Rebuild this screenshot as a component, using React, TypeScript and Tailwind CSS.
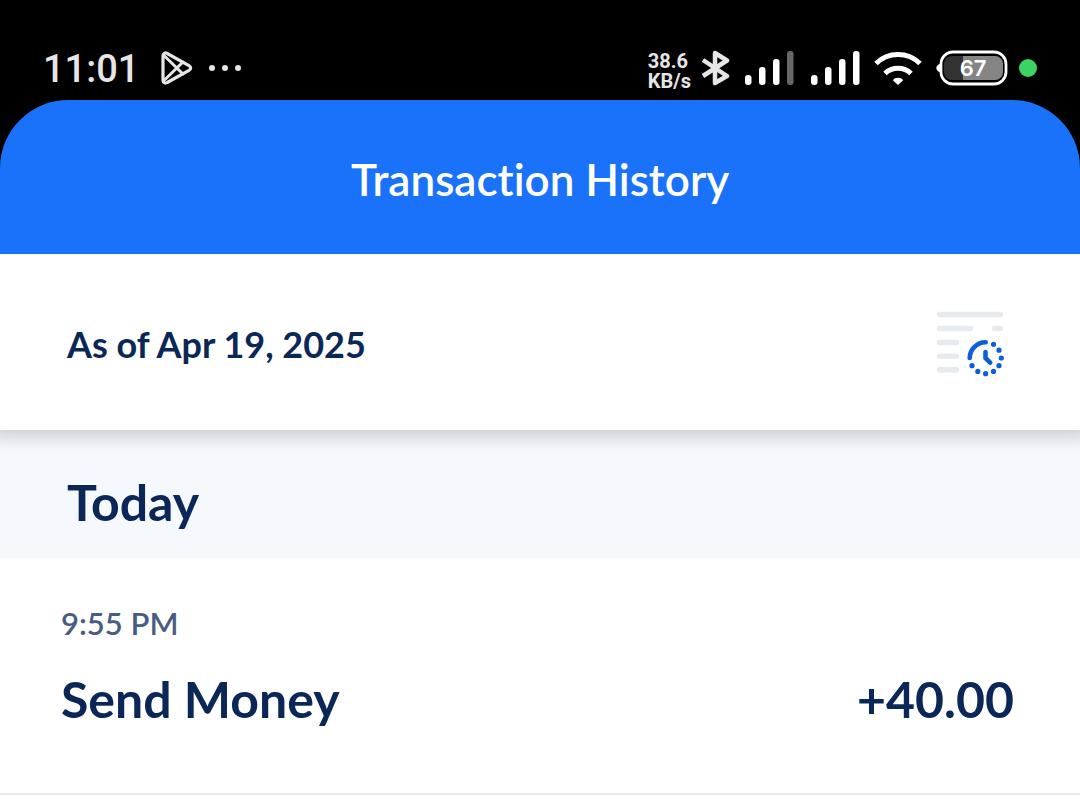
interface Transaction {
	id: number;
	time: string;
	title: string;
	amount: string;
}

const transactions: Transaction[] = [
	{ id: 1, time: "9:55 PM", title: "Send Money", amount: "+40.00" },
];

function PlayIcon() {
	return (
		<svg viewBox="0 0 32 34" className="w-8 h-[34px]" fill="none" stroke="#e6e6e6" strokeLinejoin="round" strokeLinecap="round">
			<path d="M2 4.8C2 2.4 4.2 1.3 6.2 2.5L28 14.6c2.2 1.3 2.2 3.5 0 4.8L6.2 31.5C4.2 32.700 2 31.600 2 29.200Z" strokeWidth="3.200" />
			<path d="M3 4.500 22 23M3 29.500 22 11" strokeWidth="3" />
		</svg>
	);
}

function BluetoothIcon() {
	return (
		<svg viewBox="0 0 30 36" className="w-[30px] h-9" fill="none" stroke="#e6e6e6" strokeWidth="4.500" strokeLinejoin="round">
			<path d="M2 10 26 26 14 33V3L26 10.500 2 26" />
		</svg>
	);
}

function SignalIcon({ weak = false }: { weak?: boolean }) {
	return (
		<svg viewBox="0 0 49 36" className="w-[49px] h-9" fill="#ffffff">
			<rect x="0" y="25" width="6.500" height="10" rx="3" />
			<rect x="14" y="17" width="6.500" height="18" rx="3" />
			<rect x="28" y="9" width="6.500" height="26" rx="3" />
			<rect x="42" y="1" width="6.500" height="34" rx="3" fill={weak ? "#666666" : "#ffffff"} />
		</svg>
	);
}

function WifiIcon() {
	return (
		<svg viewBox="0 0 48 36" className="w-12 h-9" fill="none" stroke="#ffffff" strokeWidth="5">
			<path d="M2 13.500C14 1.500 34 1.500 46 13.500" />
			<path d="M11 23.500C18 16.500 30 16.500 37 23.500" />
			<path d="M24 35 18.800 30.200C20.500 26.900 27.500 26.900 29.200 30.200Z" fill="#ffffff" stroke="none" />
		</svg>
	);
}

function BatteryIcon() {
	return (
		<svg viewBox="0 0 72 36" className="w-[72px] h-9" role="img" aria-label="Battery 67%">
			<path d="M4.500 13.500v9C2 21.500.3 20 .3 18s1.700-3.500 4.200-4.500Z" fill="#ffffff" />
			<rect x="5" y="2" width="65" height="32" rx="12" fill="#000000" stroke="#ffffff" strokeWidth="2.800" />
			<path d="M27 6H16a8 8 0 0 0-8 8v8a8 8 0 0 0 8 8h11Z" fill="#333333" />
			<path d="M27 6h32a8 8 0 0 1 8 8v8a8 8 0 0 1-8 8H27Z" fill="#858585" />
			<text x="37" y="26" textAnchor="middle" fill="#ffffff" className="font-['Inter',sans-serif] text-[22px] font-semibold">
				67
			</text>
		</svg>
	);
}

function HistoryIcon() {
	return (
		<svg viewBox="936 310 70 68" className="w-[70px] h-[68px]" fill="none" strokeLinecap="round">
			<path
				d="M939.500 314.500H1000.500M939.500 328.500H970.500M994.500 328.500H1000.500M939.500 342.500H956.500M939.500 356.300H956.500M939.500 369.800H956.500"
				stroke="#e7eaee"
				strokeWidth="5.500"
			/>
			<path d="M969.700 358A16 16 0 0 1 985.700 342.300M985.500 352v6l4.700 4.700" stroke="#0b5fd8" strokeWidth="4.600" strokeLinejoin="round" />
			<path
				d="M993.500 344.300h.01M999 350.200h.01M1001.300 358h.01M999 365.700h.01M993.500 371.400h.01M985.600 373.700h.01M977.800 371.400h.01M972 365.700h.01"
				stroke="#0b5fd8"
				strokeWidth="5.200"
			/>
		</svg>
	);
}

function StatusBar() {
	return (
		<div className="h-[100px] pt-9 px-[43px] flex items-center justify-between font-['Roboto',sans-serif] text-[#e6e6e6]">
			<div className="flex items-center">
				<span className="pt-[2px] text-[38px] leading-10 font-medium">11:01</span>
				<span className="ml-[22px]">
					<PlayIcon />
				</span>
				<span className="ml-4 flex gap-[7px]">
					<span className="size-[6px] rounded-full bg-[#e6e6e6]" />
					<span className="size-[6px] rounded-full bg-[#e6e6e6]" />
					<span className="size-[6px] rounded-full bg-[#e6e6e6]" />
				</span>
			</div>

			<div className="flex items-center">
				<div className="pt-[6px] text-xl leading-5 font-bold">
					<p>38.6</p>
					<p>KB/s</p>
				</div>
				<div className="ml-[10px] flex items-center gap-[14px]">
					<BluetoothIcon />
					<div className="flex gap-[17px]">
						<SignalIcon weak />
						<SignalIcon />
					</div>
					<WifiIcon />
					<BatteryIcon />
				</div>
				<span className="ml-[11px] size-[18px] rounded-full bg-[#3bd463]" />
			</div>
		</div>
	);
}

export default function App() {
	return (
		<div className="min-h-dvh bg-white font-['Lato',sans-serif] text-[#0a2757] [font-variant-ligatures:no-common-ligatures]">
			<div className="relative z-10 bg-black">
				<StatusBar />
				<header className="h-[154px] pt-1 flex items-center justify-center rounded-t-[68px] bg-[#1972f9]">
					<h1 className="text-[44px] leading-[52px] font-semibold text-white">Transaction History</h1>
				</header>
			</div>

			<main className="overflow-x-clip">
				<div className="relative h-44 pt-1 pl-[67px] pr-[74px] flex items-center justify-between bg-white shadow-[0_-10px_22px_12px_rgba(0,0,0,0.26)]">
					<p className="text-4xl leading-10 font-bold">As of Apr 19, 2025</p>
					<button type="button" aria-label="Request transaction history">
						<HistoryIcon />
					</button>
				</div>

				<section>
					<h2 className="h-32 px-[67px] pt-4 flex items-center bg-[#f5f9fe] text-[50px] font-bold">Today</h2>

					<ul>
						{transactions.map((item) => (
							<li key={item.id} className="h-[237px] pt-[45px] pl-[61px] pr-[66px] border-b-2 border-[#e8ebec] bg-white">
								<p className="text-[31px] leading-10 font-semibold text-[#485c83]">{item.time}</p>
								<div className="mt-7 flex justify-between text-[50px] leading-[56px] font-bold">
									<h3>{item.title}</h3>
									<span>{item.amount}</span>
								</div>
							</li>
						))}
					</ul>
				</section>
			</main>
		</div>
	);
}
